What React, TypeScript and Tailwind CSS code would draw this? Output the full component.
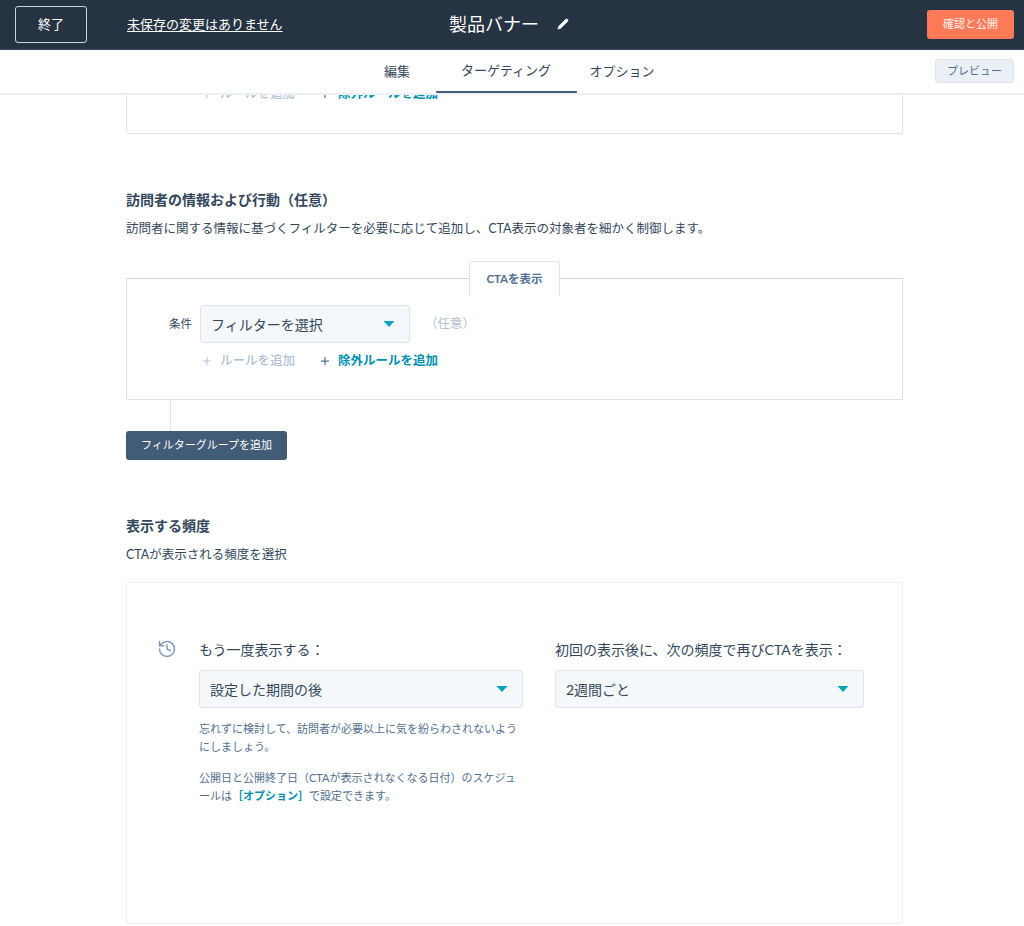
import React from 'react';
import { Pencil, Plus, History } from 'lucide-react';

const font = 'font-[Lato,"Noto_Sans_CJK_JP",sans-serif]';

const Caret = () => (
  <svg width="12" height="6" viewBox="0 0 12 6" className="shrink-0">
    <path d="M0.5 0 H11.5 L6 6 Z" fill="#00a4bd" />
  </svg>
);

const Select: React.FC<{ label: string; className?: string }> = ({ label, className = '' }) => (
  <div
    className={`flex h-[38px] items-center justify-between rounded-[3px] border border-[#dfe3eb] bg-[#f5f8fa] pl-[10px] pr-[14px] text-[14px] text-[#33475b] ${className}`}
  >
    <span>{label}</span>
    <Caret />
  </div>
);

const RuleLinks = () => (
  <div className="flex items-center gap-[24px] pl-[74px] text-[12.5px] font-medium">
    <span className="flex items-center gap-[7px] text-[#b0c1d4]">
      <Plus size={12} strokeWidth={2} />
      ルールを追加
    </span>
    <span className="flex items-center gap-[7px] font-bold text-[#0091ae]">
      <Plus size={12} strokeWidth={2.5} className="text-[#516f90]" />
      除外ルールを追加
    </span>
  </div>
);

export default function App() {
  return (
    <div className={`h-[926px] w-[1024px] overflow-hidden bg-white ${font} text-[#33475b]`}>
      <header className="relative z-10 flex h-[50px] items-center justify-between border-b border-[#3d4f61] bg-[#253342] pl-[15px] pr-[10px] text-white">
        <div className="flex items-center">
          <button className="flex h-[37px] w-[72px] items-center justify-center rounded-[3px] border border-[#cbd6e2] text-[13px]">
            終了
          </button>
          <span className="ml-[40px] text-[13px] underline underline-offset-2">未保存の変更はありません</span>
        </div>
        <div className="absolute left-[449px] top-[11px] flex items-center gap-[18px] text-[18px] leading-[26px]">
          製品バナー
          <Pencil size={12} fill="white" strokeWidth={1.5} />
        </div>
        <button className="flex h-[29px] w-[87px] items-center justify-center rounded-[3px] bg-[#ff7a59] text-[11px] text-[#fff1ec]">
          確認と公開
        </button>
      </header>

      <nav className="relative z-10 flex h-[45px] items-center justify-center border-b-2 border-[#eaf0f6] bg-white text-[13px]">
        <div className="ml-[2px] flex h-full items-stretch">
          <span className="flex w-[77px] items-center justify-center">編集</span>
          <span className="flex w-[141px] items-center justify-center rounded-b-[1px] border-b-2 border-[#425b76]">
            ターゲティング
          </span>
          <span className="flex w-[91px] items-center justify-center">オプション</span>
        </div>
        <button className="absolute right-[10px] top-[9px] flex h-[24px] w-[79px] items-center justify-center rounded-[3px] border border-[#dfe3eb] bg-[#eaf0f6] text-[11px] text-[#506e91]">
          プレビュー
        </button>
      </nav>

      <main className="px-[126px]">
        <div className="mt-[-10px] w-[777px]">
          <section className="h-[49px] rounded-b-[2px] border border-t-0 border-[#dfe3eb] pt-[0px]">
            <RuleLinks />
          </section>

          <h2 className="mt-[56px] text-[14px] font-bold leading-[20px]">訪問者の情報および行動（任意）</h2>
          <p className="mt-[9px] text-[12.5px] leading-[20px]">
            訪問者に関する情報に基づくフィルターを必要に応じて追加し、CTA表示の対象者を細かく制御します。
          </p>

          <div className="relative mt-[39px] h-[122px] border border-[#cbd6e2] border-b-[#dfe3eb] border-x-[#dfe3eb]">
            <span className="absolute left-[342px] top-[-18px] flex h-[35px] w-[91px] items-center justify-center rounded-t-[3px] border border-b-0 border-[#dfe3eb] bg-white text-[11.5px] font-bold text-[#516f90]">
              CTAを表示
            </span>
            <div className="flex items-center pt-[26px]">
              <span className="w-[65px] text-right text-[11.5px]">条件</span>
              <Select label="フィルターを選択" className="ml-[8px] w-[210px]" />
              <span className="ml-[15px] text-[12.5px] text-[#b0c1d4]">（任意）</span>
            </div>
            <div className="mt-[9px]">
              <RuleLinks />
            </div>
          </div>

          <div className="ml-[44px] h-[31px] w-px bg-[#dfe3eb]" />
          <button className="flex h-[29px] w-[161px] items-center justify-center rounded-[3px] bg-[#425b76] text-[11px] text-white">
            フィルターグループを追加
          </button>

          <h2 className="mt-[56px] text-[14px] font-bold leading-[20px]">表示する頻度</h2>
          <p className="mt-[9px] text-[12.5px] leading-[20px]">CTAが表示される頻度を選択</p>

          <section className="mt-[17px] flex h-[342px] rounded-[3px] border border-[#eaf0f6] pl-[30px] pt-[57px]">
            <History size={20} strokeWidth={1.75} className="mt-[-1px] text-[#7c98b6]" />
            <div className="ml-[22px] w-[324px]">
              <p className="text-[14px] leading-[20px]">もう一度表示する：</p>
              <Select label="設定した期間の後" className="mt-[10px]" />
              <p className="mt-[12px] text-[11px] leading-[18px] text-[#516f90]">
                忘れずに検討して、訪問者が必要以上に気を紛らわされないようにしましょう。
              </p>
              <p className="mt-[13px] text-[11px] leading-[18px] text-[#516f90]">
                公開日と公開終了日（CTAが表示されなくなる日付）のスケジュールは
                <span className="font-bold text-[#0091ae]">［オプション］</span>で設定できます。
              </p>
            </div>
            <div className="ml-[32px] w-[309px]">
              <p className="whitespace-nowrap text-[14px] leading-[20px]">初回の表示後に、次の頻度で再びCTAを表示：</p>
              <Select label="2週間ごと" className="mt-[10px]" />
            </div>
          </section>
        </div>
      </main>
    </div>
  );
}
